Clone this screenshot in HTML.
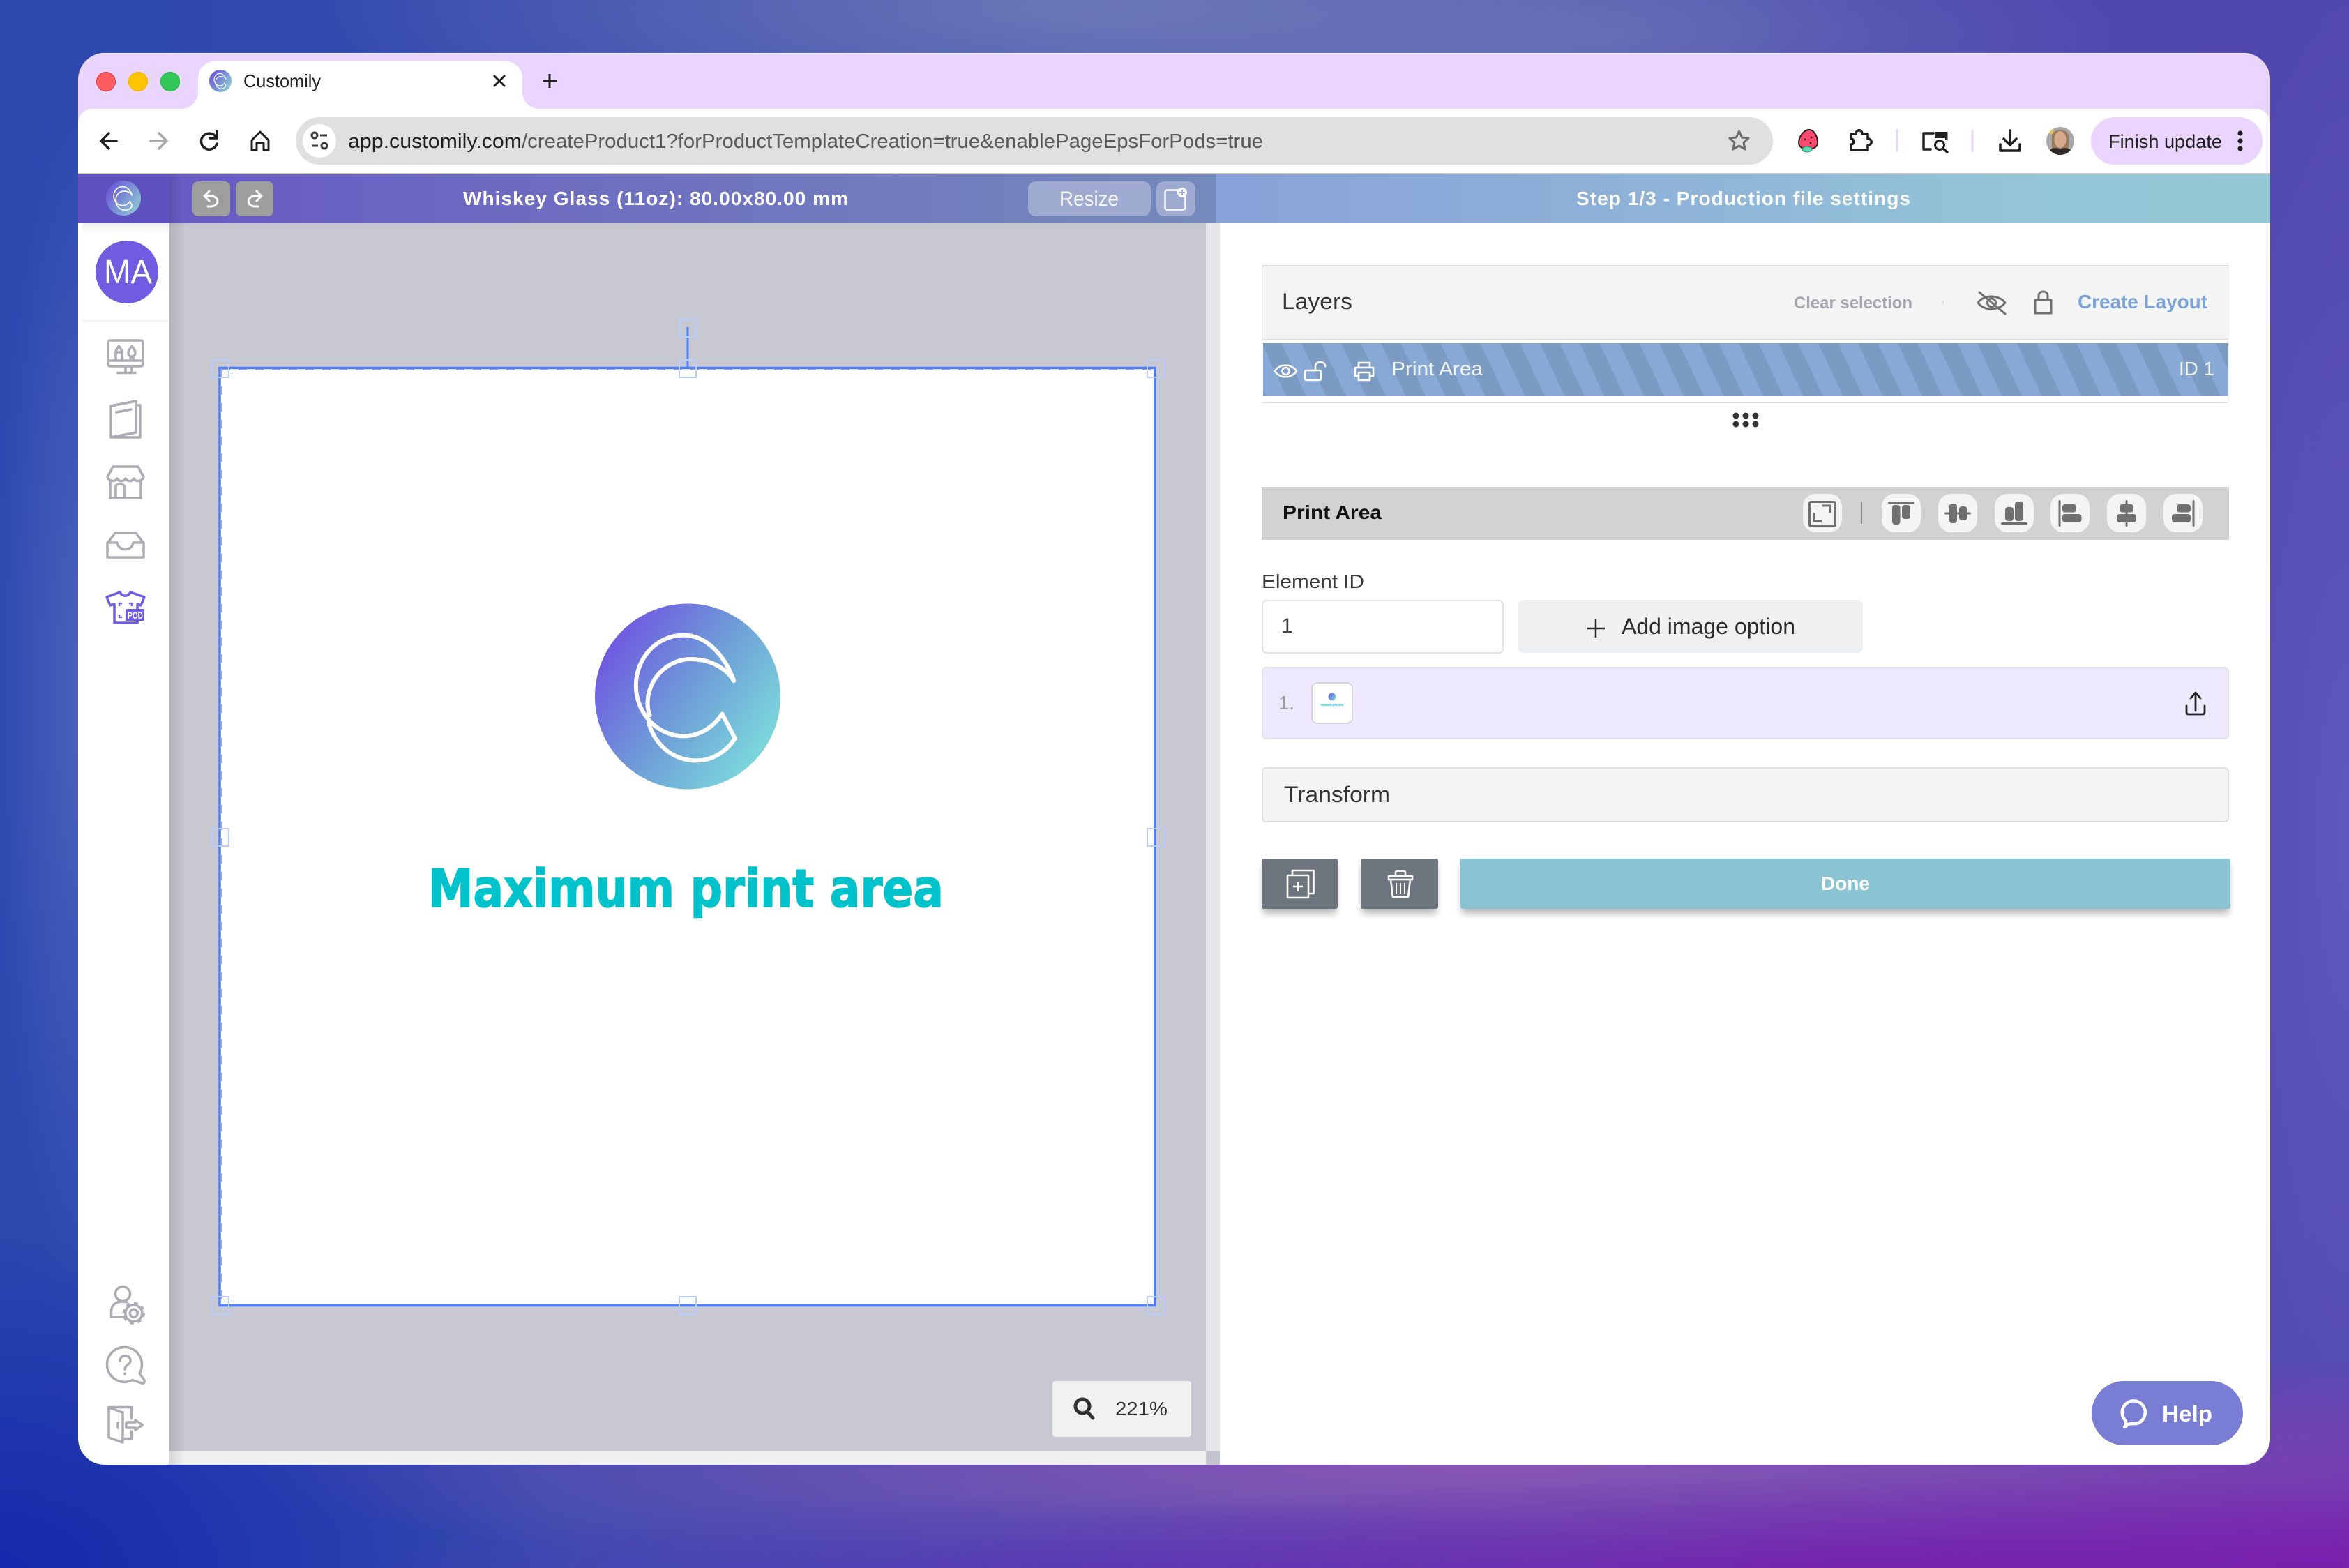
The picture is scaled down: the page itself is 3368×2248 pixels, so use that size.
<!DOCTYPE html>
<html>
<head>
<meta charset="utf-8">
<title>Customily</title>
<style>
html,body{margin:0;padding:0;width:3368px;height:2248px;overflow:hidden}
body{background:
 radial-gradient(1500px 150px at 2750px 2262px,#7720ae,rgba(119,32,174,0) 100%),
 radial-gradient(1000px 120px at 1500px 2262px,rgba(84,60,180,.95),rgba(84,60,180,0) 100%),
 radial-gradient(1800px 190px at 2150px 2100px,rgba(140,86,180,.97),rgba(140,86,180,0) 100%),
 radial-gradient(1100px 230px at 1560px 10px,rgba(112,126,184,.85),rgba(112,126,184,0) 100%),
 radial-gradient(800px 180px at 2250px 50px,rgba(112,122,184,.65),rgba(112,122,184,0) 100%),
 radial-gradient(1000px 300px at 3300px 2248px,#7a1fae,rgba(122,31,174,0) 100%),
 radial-gradient(240px 1300px at 3368px 1200px,rgba(98,90,190,.9),rgba(98,90,190,0) 100%),
 radial-gradient(800px 480px at 0px 2248px,#1528ac,rgba(21,40,172,0) 100%),
 radial-gradient(140px 900px at 125px 1000px,rgba(90,110,195,.7),rgba(90,110,195,0) 100%),
 linear-gradient(90deg,#2a48ae 0%,#4a50b0 50%,#5046ae 100%);
 font-family:"Liberation Sans",Arial,sans-serif}
svg{position:absolute;left:0;top:0;display:block}
text{font-family:"Liberation Sans",Arial,sans-serif}
.sb{fill:none;stroke:#abacb4;stroke-width:3.5;stroke-linejoin:round;stroke-linecap:round}
.ai{fill:#707070}
.wh{fill:none;stroke:#fff;stroke-width:3;stroke-linecap:round;stroke-linejoin:round}
.dk{fill:none;stroke:#1f1f1f;stroke-width:3.5;stroke-linecap:round;stroke-linejoin:round}
</style>
</head>
<body>
<svg width="3368" height="2248" viewBox="0 0 3368 2248" xmlns="http://www.w3.org/2000/svg">
<defs>
 <clipPath id="win"><rect x="112" y="76" width="3143" height="2024" rx="38"/></clipPath>
 <linearGradient id="lg" x1="0.08" y1="0.2" x2="0.95" y2="0.8">
  <stop offset="0" stop-color="#6f58e0"/><stop offset=".5" stop-color="#6f9fd8"/><stop offset="1" stop-color="#7cdcdc"/>
 </linearGradient>
 <linearGradient id="lg2" x1="0.08" y1="0.2" x2="0.95" y2="0.8">
  <stop offset="0" stop-color="#6a5ad8"/><stop offset="1" stop-color="#8cc8d2"/>
 </linearGradient>
 <linearGradient id="hl" x1="0" x2="1" y1="0" y2="0">
  <stop offset="0" stop-color="#6656c4"/><stop offset=".45" stop-color="#6e6ec0"/><stop offset="1" stop-color="#758abc"/>
 </linearGradient>
 <linearGradient id="hr" x1="0" x2="1" y1="0" y2="0">
  <stop offset="0" stop-color="#8aa2da"/><stop offset=".45" stop-color="#8fb4d8"/><stop offset=".75" stop-color="#93c5d6"/><stop offset="1" stop-color="#93c8d6"/>
 </linearGradient>
 <linearGradient id="sh" x1="0" x2="1" y1="0" y2="0">
  <stop offset="0" stop-color="#000" stop-opacity=".11"/><stop offset="1" stop-color="#000" stop-opacity="0"/>
 </linearGradient>
 <linearGradient id="shv" x1="0" x2="0" y1="0" y2="1">
  <stop offset="0" stop-color="#000" stop-opacity=".1"/><stop offset="1" stop-color="#000" stop-opacity="0"/>
 </linearGradient>
 <pattern id="stripes" width="57" height="76" patternUnits="userSpaceOnUse" patternTransform="translate(1809 492) skewX(25)">
  <rect width="57" height="76" fill="#88a9d6"/>
  <rect x="0" width="28.5" height="76" fill="#7b9bc3"/>
 </pattern>
 <filter id="blur" x="-20%" y="-20%" width="140%" height="160%"><feGaussianBlur stdDeviation="5"/></filter>
 <symbol id="cmark" viewBox="99 77 796 796">
  <circle cx="497" cy="475" r="398" fill="url(#lg)"/>
  <g fill="none" stroke="#fff" stroke-width="18" stroke-linecap="round" stroke-linejoin="round">
   <path d="M695,408 C665,320 590,212 478,212 C365,212 275,310 275,428 C275,545 365,645 480,645 C545,645 605,610 645,550 L700,655 C660,715 600,750 535,750 C440,750 360,690 330,590"/>
   <path d="M695,408 C660,350 590,315 510,315 C410,315 325,400 325,505 C325,525 328,540 334,555"/>
  </g>
 </symbol>
 <symbol id="cmark2" viewBox="99 77 796 796">
  <circle cx="497" cy="475" r="398" fill="url(#lg2)"/>
  <g fill="none" stroke="#fff" stroke-width="26" stroke-linecap="round" stroke-linejoin="round">
   <path d="M695,408 C665,320 590,212 478,212 C365,212 275,310 275,428 C275,545 365,645 480,645 C545,645 605,610 645,550 L700,655 C660,715 600,750 535,750 C440,750 360,690 330,590"/>
   <path d="M695,408 C660,350 590,315 510,315 C410,315 325,400 325,505 C325,525 328,540 334,555"/>
  </g>
 </symbol>
</defs>

<g clip-path="url(#win)">
 <!-- tab strip -->
 <rect x="112" y="76" width="3143" height="120" fill="#e9d5fd"/>
 <rect x="112" y="76" width="3143" height="2" fill="#f4ecfe"/>
 <path d="M260,156 A24,24 0 0 0 284,132 V112 A24,24 0 0 1 308,88 H725 A24,24 0 0 1 749,112 V132 A24,24 0 0 0 773,156 Z" fill="#fff"/>
 <circle cx="152" cy="117" r="13.5" fill="#ff5c61" stroke="#f0303c" stroke-width="1"/>
 <circle cx="198" cy="117" r="13.5" fill="#fdc500" stroke="#f2b200" stroke-width="1"/>
 <circle cx="244" cy="117" r="13.5" fill="#34c759" stroke="#12b83e" stroke-width="1"/>
 <use href="#cmark2" x="300" y="100" width="32" height="32"/>
 <text x="349" y="125" font-size="26" fill="#1f1f1f" textLength="111" lengthAdjust="spacingAndGlyphs">Customily</text>
 <path d="M708,108 L724,124 M724,108 L708,124" fill="none" stroke="#1f1f1f" stroke-width="3"/>
 <path d="M788,106 V126 M778,116 H798" fill="none" stroke="#1f1f1f" stroke-width="3"/>

 <!-- toolbar -->
 <rect x="112" y="156" width="3143" height="120" rx="20" fill="#fff"/>
 <rect x="112" y="248" width="3143" height="2" fill="#c8c8c8"/>
 <path class="dk" d="M167,202 H146 M156,191 L145,202 L156,213"/>
 <path class="dk" d="M216,202 H238 M228,191 L239,202 L228,213" style="stroke:#a8a8a8"/>
 <path class="dk" d="M310,197 A11.5,11.5 0 1 0 311,206 M311,188 V198 H301"/>
 <path d="M373,189 L361,201 V215 H368 V205 H378 V215 H385 V201 Z" fill="none" stroke="#1f1f1f" stroke-width="3" stroke-linejoin="round"/>
 <rect x="424" y="168" width="2118" height="68" rx="34" fill="#e0e0e0"/>
 <circle cx="458" cy="202" r="24" fill="#fff"/>
 <g fill="none" stroke="#3c3c3c" stroke-width="3">
  <circle cx="451" cy="194" r="4"/><path d="M459,194 H469 M447,209 H456"/><circle cx="465" cy="209" r="4"/>
 </g>
 <text x="499" y="212" font-size="29" fill="#1f1f1f" textLength="249" lengthAdjust="spacingAndGlyphs">app.customily.com</text>
 <text x="748" y="212" font-size="29" fill="#5a5a5a" textLength="1063" lengthAdjust="spacingAndGlyphs">/createProduct1?forProductTemplateCreation=true&amp;enablePageEpsForPods=true</text>
 <polygon points="2493.5,188 2497.5,197 2507,198 2500,204.5 2502,214 2493.5,209 2485,214 2487,204.5 2480,198 2489.5,197" fill="none" stroke="#6b6b6b" stroke-width="3" stroke-linejoin="round"/>
 <path d="M2595,186 C2602,187 2607,198 2606,206 C2605,212 2598,214 2592,214 C2586,214 2579,212 2579,204 C2579,196 2587,185 2595,186Z" fill="#ff4870" stroke="#222" stroke-width="2"/>
 <ellipse cx="2591" cy="214" rx="7" ry="4" fill="#5fd8b0" stroke="#2f7a66" stroke-width="1"/>
 <circle cx="2588" cy="200" r="1.4" fill="#222"/><circle cx="2597" cy="197" r="1.4" fill="#222"/><circle cx="2596" cy="205" r="1.4" fill="#222"/>
 <path class="dk" d="M2654,192 H2661 C2661,185 2670,185 2670,192 H2678 V199 C2685,199 2685,208 2678,208 V215 H2654 V207 C2659,207 2659,199 2654,199 Z"/>
 <rect x="2718.5" y="186" width="3" height="32" rx="1.5" fill="#e9d5fd"/>
 <path class="dk" d="M2772,191 H2758 V214 H2768"/>
 <rect x="2774" y="189" width="17" height="9" fill="#1f1f1f"/>
 <rect x="2789" y="189" width="3.5" height="12" fill="#1f1f1f"/>
 <circle cx="2781" cy="208" r="6.5" fill="none" stroke="#1f1f1f" stroke-width="3"/>
 <path class="dk" d="M2786,213 L2792,218"/>
 <rect x="2826.5" y="186" width="3" height="32" rx="1.5" fill="#e9d5fd"/>
 <path class="dk" d="M2882,187 V207 M2873,199 L2882,208 L2891,199 M2868,207 V216 H2896 V207"/>
 <clipPath id="av"><circle cx="2954" cy="202" r="20"/></clipPath>
 <circle cx="2954" cy="202" r="20" fill="#a8a8aa"/>
 <g clip-path="url(#av)">
  <path d="M2942,222 V196 C2942,183 2966,183 2966,196 V222 Z" fill="#9a7a58"/>
  <ellipse cx="2954" cy="200" rx="8.5" ry="12" fill="#d8a98c"/>
  <path d="M2934,224 C2936,212 2948,210 2954,214 C2960,210 2972,212 2974,224 Z" fill="#2e2a28"/>
  <rect x="2938" y="182" width="6" height="10" fill="#e0c060"/>
 </g>
 <rect x="2998" y="168" width="246" height="68" rx="34" fill="#e9d5fd"/>
 <text x="3023" y="212" font-size="27" fill="#1f1f1f" textLength="163" lengthAdjust="spacingAndGlyphs">Finish update</text>
 <circle cx="3212" cy="191" r="3.6" fill="#1f1f1f"/><circle cx="3212" cy="202" r="3.6" fill="#1f1f1f"/><circle cx="3212" cy="213" r="3.6" fill="#1f1f1f"/>

 <!-- app header -->
 <rect x="112" y="250" width="1632" height="70" fill="url(#hl)"/>
 <rect x="1744" y="250" width="1511" height="70" fill="url(#hr)"/>

 <!-- canvas -->
 <rect x="112" y="320" width="3143" height="1780" fill="#fff"/>
 <rect x="242" y="320" width="1487" height="1760" fill="#c8c8d2"/>
 <rect x="242" y="2080" width="1487" height="20" fill="#f0f0f0"/>
 <rect x="1729" y="320" width="20" height="1760" fill="#e7e7e9"/>
 <rect x="1729" y="2080" width="20" height="20" fill="#c4c4ce"/>
 <rect x="242" y="320" width="24" height="1780" fill="url(#sh)"/>
 <rect x="242" y="250" width="18" height="70" fill="url(#sh)"/>
 <rect x="242" y="320" width="1487" height="10" fill="url(#shv)" opacity=".25"/>

 <!-- sidebar -->
 <rect x="112" y="250" width="130" height="70" fill="#5f50c0"/>
 <use href="#cmark2" x="152" y="259" width="50" height="50"/>
 <rect x="118" y="320" width="124" height="16" fill="url(#shv)" opacity=".6"/>
 <rect x="118" y="459" width="124" height="2" fill="#f3f3f4"/>
 <rect x="118" y="461" width="124" height="4" fill="url(#shv)" opacity=".25"/>
 <circle cx="182" cy="390" r="45" fill="#6f5ce0"/>
 <text x="149" y="406" font-size="48" fill="#fff" textLength="69" lengthAdjust="spacingAndGlyphs">MA</text>

 <!-- monitor -->
 <g class="sb">
  <rect x="155" y="488" width="50" height="37" rx="3"/>
  <path d="M155,517 H205 M180,526 V534 M189,526 V534 M169,534.5 H194"/>
  <path d="M166,516 V503 L170.5,496 L175,503 V516 M166,505 H175"/>
  <path d="M189,496 C186,500 184,503 184,506 C184,509 186,511 189,511 C192,511 194,509 194,506 C194,503 192,500 189,496 Z M187,511 V516 M191,511 V516"/>
 </g>
 <!-- book -->
 <g class="sb">
  <path d="M159,582 L195,575 V620 L159,627 Z"/>
  <path d="M196,581 H201 V627 H159"/>
  <path d="M167,591 L188,587"/>
 </g>
 <!-- store -->
 <g class="sb">
  <path d="M162,669 H198 L206,684 C203,691 194,691 192,686 C189,691 183,691 180,686 C177,691 171,691 168,686 C165,691 157,691 154,684 Z"/>
  <path d="M158,690 V714 H202 V690"/>
  <path d="M166,714 V698 C166,692 178,692 178,698 V714"/>
 </g>
 <!-- inbox -->
 <g class="sb">
  <path d="M165,764 H195 L206,779 V799 H154 V779 Z"/>
  <path d="M154,778 H168 C170,791 189,791 191,778 H206"/>
 </g>
 <!-- shirt -->
 <g fill="none" stroke="#6f5ce0" stroke-width="3.5" stroke-linejoin="round" stroke-linecap="round">
  <path d="M153,856 L172,849 C175,856 184,856 187,849 L207,856 L202,868 L197,866 V893 H164 V866 L158,868 Z"/>
  <path stroke-width="2.5" d="M171,868 V865 H174 M186,865 H189 V868 M171,882 V885 H174"/>
 </g>
 <rect x="180" y="873" width="27" height="17" rx="2" fill="#6f5ce0"/>
 <text x="183" y="887" font-size="14" font-weight="bold" fill="#fff" textLength="22" lengthAdjust="spacingAndGlyphs">POD</text>
 <!-- user gear -->
 <g class="sb">
  <circle cx="176" cy="1855" r="10.5"/>
  <path d="M178,1888 H159.5 V1880 C159.5,1870 167,1866 176,1866 C178,1866 180,1866 182,1867"/>
  <circle cx="191.7" cy="1882.7" r="5.5"/>
  <circle cx="191.7" cy="1882.7" r="12"/>
 </g>
 <circle cx="191.7" cy="1882.7" r="14.5" fill="none" stroke="#abacb4" stroke-width="3.5" stroke-dasharray="5.5 5.9"/>
 <!-- help -->
 <g class="sb">
  <path d="M200,1969 A25,25 0 1 0 190,1978.5 L203,1983 C207,1984 208,1981 206.5,1978 Z"/>
  <path d="M172,1951 C172,1941 187,1941 187,1951 C187,1956 179,1957 179,1963"/>
  <path d="M179,1969 V1970"/>
 </g>
 <!-- door -->
 <g class="sb">
  <path d="M156,2018 L176,2025 V2068 L156,2061 Z"/>
  <path d="M156,2017.5 H188.5 V2034 M188.5,2052 V2062.5 H178"/>
  <path d="M169,2040 V2047"/>
  <path d="M181,2039 H194 V2036 L204.5,2043 L194,2050 V2047 H181 Z"/>
 </g>

 <!-- print area -->
 <rect x="315" y="528" width="1341" height="1344" fill="#fff"/>
 <path d="M318,530 H1654 M318,530 V1870" fill="none" stroke="#aaaab4" stroke-width="2" stroke-dasharray="12 12"/>
 <rect x="315" y="527.5" width="1341" height="1344" fill="none" stroke="#4f80fa" stroke-width="3.5"/>
 <path d="M986,469 V527" stroke="#4f80fa" stroke-width="3"/>
 <g fill="none" stroke="#b8ceff" stroke-width="2">
  <rect x="974" y="458" width="24" height="25"/>
  <rect x="304" y="516" width="24" height="25"/><rect x="974" y="516" width="24" height="25"/><rect x="1645" y="516" width="24" height="25"/>
  <rect x="304" y="1188" width="24" height="25"/><rect x="1645" y="1188" width="24" height="25"/>
  <rect x="304" y="1859" width="24" height="25"/><rect x="974" y="1859" width="24" height="25"/><rect x="1645" y="1859" width="24" height="25"/>
 </g>
 <use href="#cmark" x="853" y="865" width="266" height="267"/>
 <text x="614" y="1300" font-size="75" font-weight="bold" fill="#00c2cb" stroke="#00c2cb" stroke-width="1.6" textLength="739" lengthAdjust="spacingAndGlyphs" style="font-family:'DejaVu Sans',sans-serif">Maximum print area</text>

 <!-- zoom box -->
 <rect x="1509" y="1980" width="199" height="80" rx="4" fill="#f1f1f1"/>
 <circle cx="1552" cy="2016" r="10" fill="none" stroke="#2f2f2f" stroke-width="5"/>
 <path d="M1559,2024 L1567,2033" stroke="#2f2f2f" stroke-width="5" stroke-linecap="round"/>
 <text x="1599" y="2029" font-size="28" fill="#333" textLength="75" lengthAdjust="spacingAndGlyphs">221%</text>

 <!-- header controls -->
 <rect x="276" y="260" width="54" height="50" rx="8" fill="#9e9e9e"/>
 <rect x="338" y="260" width="54" height="50" rx="8" fill="#9e9e9e"/>
 <path class="wh" d="M300,274 L293,281 L300,288 M293,281 H302 C315,281 315,296 302,296 H298" stroke-width="2.5"/>
 <path class="wh" d="M368,274 L375,281 L368,288 M375,281 H366 C353,281 353,296 366,296 H370" stroke-width="2.5"/>
 <text x="664" y="294" font-size="28" font-weight="bold" fill="#fff" textLength="552" lengthAdjust="spacing">Whiskey Glass (11oz): 80.00x80.00 mm</text>
 <rect x="1474" y="260" width="176" height="50" rx="11" fill="#9faad1"/>
 <rect x="1658" y="260" width="56" height="50" rx="11" fill="#9faad1"/>
 <text x="1519" y="295" font-size="30" fill="#f6f7fb" textLength="85" lengthAdjust="spacingAndGlyphs">Resize</text>
 <rect x="1670.5" y="272.5" width="29" height="28" rx="3" fill="none" stroke="#fff" stroke-width="2.5"/>
 <circle cx="1695" cy="276" r="7" fill="#fff"/>
 <path d="M1695,272 V280 M1691,276 H1699" stroke="#9faad1" stroke-width="2"/>
 <text x="2260" y="294" font-size="28" font-weight="bold" fill="#fff" textLength="479" lengthAdjust="spacing">Step 1/3 - Production file settings</text>

 <!-- Layers -->
 <rect x="1809" y="380" width="1386.5" height="198" rx="3" fill="#fff"/>
 <rect x="1809" y="380" width="1386.5" height="108" fill="#f4f4f4"/>
 <rect x="1809" y="380" width="1386.5" height="2" fill="#dcdcdc"/>
 <rect x="1809" y="486" width="1386.5" height="2" fill="#dcdcdc"/>
 <rect x="1809" y="576" width="1386.5" height="2" fill="#dcdcdc"/>
 <path d="M1809.5,382 V578 M3195,382 V578" stroke="#e6e6e6" stroke-width="1"/>
 <rect x="1811" y="492" width="1384" height="76" fill="url(#stripes)"/>
 <text x="1838" y="443" font-size="32" fill="#333" textLength="101" lengthAdjust="spacingAndGlyphs">Layers</text>
 <text x="2572" y="442" font-size="24" font-weight="bold" fill="#a6a6ae" textLength="170" lengthAdjust="spacingAndGlyphs">Clear selection</text>
 <rect x="2785" y="432" width="2" height="4" fill="#ddd"/>
 <g fill="none" stroke="#707070" stroke-width="3" stroke-linecap="round" stroke-linejoin="round">
  <path d="M2836,434 C2844,422 2866,422 2875,434 C2866,446 2844,446 2836,434 Z"/>
  <circle cx="2855.5" cy="434" r="6"/>
  <path d="M2838,419 L2875,450"/>
  <path d="M2918,430 H2941 V449 H2918 Z"/>
  <path d="M2923,430 V424 C2923,416 2936,416 2936,424 V430"/>
 </g>
 <text x="2979" y="442" font-size="28" font-weight="bold" fill="#7ba3d8" textLength="186" lengthAdjust="spacingAndGlyphs">Create Layout</text>
 <g fill="none" stroke="#fff" stroke-width="2.6" stroke-linejoin="round" stroke-linecap="round">
  <path d="M1828,532 C1834,521 1852,521 1859,532 C1852,543 1834,543 1828,532 Z"/>
  <circle cx="1843.5" cy="532" r="5"/>
  <rect x="1871" y="531" width="23" height="14" rx="2"/>
  <path d="M1886,531 V525 C1886,517 1900,517 1900,525"/>
  <path d="M1948,527 V520 H1964 V527 M1943,539 V527 H1969 V539 H1964 M1948,539 H1943 M1948,534 H1964 V545 H1948 Z"/>
 </g>
 <text x="1995" y="538" font-size="28" fill="#f2f5fa" textLength="131" lengthAdjust="spacingAndGlyphs">Print Area</text>
 <text x="3124" y="538" font-size="28" fill="#f2f5fa" textLength="51" lengthAdjust="spacingAndGlyphs">ID 1</text>
 <g fill="#333">
  <circle cx="2489" cy="596" r="4.5"/><circle cx="2503" cy="596" r="4.5"/><circle cx="2517" cy="596" r="4.5"/>
  <circle cx="2489" cy="608" r="4.5"/><circle cx="2503" cy="608" r="4.5"/><circle cx="2517" cy="608" r="4.5"/>
 </g>

 <!-- Print Area bar -->
 <rect x="1809" y="698" width="1387" height="76" fill="#d2d2d2"/>
 <text x="1839" y="744" font-size="28" font-weight="bold" fill="#111" textLength="142" lengthAdjust="spacingAndGlyphs">Print Area</text>
 <g fill="#f4f4f4">
  <rect x="2585" y="708" width="56" height="55" rx="18"/>
  <rect x="2698" y="708" width="56" height="55" rx="18"/>
  <rect x="2779" y="708" width="56" height="55" rx="18"/>
  <rect x="2860" y="708" width="56" height="55" rx="18"/>
  <rect x="2940" y="708" width="56" height="55" rx="18"/>
  <rect x="3021" y="708" width="56" height="55" rx="18"/>
  <rect x="3102" y="708" width="56" height="55" rx="18"/>
 </g>
 <rect x="2668" y="720" width="2" height="31" fill="#8a8a8a"/>
 <rect x="2594.5" y="719.5" width="37" height="35" rx="2" fill="none" stroke="#707070" stroke-width="3"/>
 <path d="M2612.5,725 H2624.5 V735 M2600.5,735 V747 H2612" fill="none" stroke="#707070" stroke-width="3"/>
 <g class="ai">
  <rect x="2707" y="719" width="38" height="3" rx="1.5"/><rect x="2713" y="724" width="11.5" height="28" rx="4"/><rect x="2727" y="724" width="12" height="20" rx="4"/>
  <rect x="2788" y="734.5" width="38" height="3" rx="1.5"/><rect x="2795" y="722" width="11" height="28" rx="4"/><rect x="2809" y="726" width="11.5" height="20" rx="4"/>
  <rect x="2869" y="749" width="38" height="3" rx="1.5"/><rect x="2875" y="727" width="12" height="20" rx="4"/><rect x="2889" y="719" width="12" height="28" rx="4"/>
  <rect x="2951.5" y="717" width="3" height="38" rx="1.5"/><rect x="2957" y="723" width="20" height="11.5" rx="4"/><rect x="2957" y="737" width="27.5" height="12" rx="4"/>
  <rect x="3047.5" y="717" width="3" height="38" rx="1.5"/><rect x="3039" y="723" width="20" height="11.5" rx="4"/><rect x="3035" y="737" width="28" height="12" rx="4"/>
  <rect x="3143.5" y="717" width="3" height="38" rx="1.5"/><rect x="3121" y="723" width="20" height="11.5" rx="4"/><rect x="3114" y="737" width="27" height="12" rx="4"/>
 </g>

 <!-- Element ID -->
 <text x="1809" y="843" font-size="28" fill="#3a3a3a" textLength="147" lengthAdjust="spacingAndGlyphs">Element ID</text>
 <rect x="1810" y="861" width="345" height="75" rx="6" fill="#fff" stroke="#e2e2e4" stroke-width="2"/>
 <text x="1837" y="907" font-size="30" fill="#444">1</text>
 <rect x="2176" y="860" width="495" height="76" rx="8" fill="#eff0f2"/>
 <path d="M2288,888 V914 M2275,901 H2301" stroke="#2a2a2a" stroke-width="2.5"/>
 <text x="2325" y="909" font-size="32" fill="#2a2a2a" textLength="249" lengthAdjust="spacingAndGlyphs">Add image option</text>

 <!-- option row -->
 <rect x="1810" y="957" width="1385" height="102" rx="5" fill="#ede8fc" stroke="#e2e0ea" stroke-width="2"/>
 <text x="1833" y="1017" font-size="28" fill="#9a9a9a" textLength="23" lengthAdjust="spacing">1.</text>
 <rect x="1881" y="979" width="58" height="58" rx="8" fill="#fff" stroke="#d4d4de" stroke-width="2"/>
 <circle cx="1910" cy="999" r="5.5" fill="url(#lg)"/>
 <text x="1894" y="1012" font-size="4.5" font-weight="bold" fill="#00c2cb" textLength="32" lengthAdjust="spacingAndGlyphs">Maximum print area</text>
 <path d="M3148,1019 V994 M3141,1001 L3148,993 L3155,1001 M3135,1012 V1021 C3135,1023 3136,1024 3138,1024 H3158 C3160,1024 3161,1023 3161,1021 V1012" fill="none" stroke="#222" stroke-width="2.8" stroke-linecap="round" stroke-linejoin="round"/>

 <!-- transform -->
 <rect x="1810" y="1101" width="1385" height="77" rx="5" fill="#f4f4f4" stroke="#dedede" stroke-width="2"/>
 <text x="1841" y="1150" font-size="32" fill="#333" textLength="152" lengthAdjust="spacingAndGlyphs">Transform</text>

 <!-- buttons -->
 <g filter="url(#blur)" opacity=".28" fill="#000">
  <rect x="1811" y="1240" width="105" height="70"/><rect x="1953" y="1240" width="107" height="70"/><rect x="2096" y="1240" width="1100" height="70"/>
 </g>
 <rect x="1809" y="1231" width="109" height="72" rx="3" fill="#6c747e"/>
 <rect x="1951" y="1231" width="111" height="72" rx="3" fill="#6c747e"/>
 <rect x="2094" y="1231" width="1104" height="72" rx="3" fill="#8ac4d2"/>
 <g fill="none" stroke="#fff" stroke-width="2.6" stroke-linejoin="round">
  <path d="M1853,1255 V1248 H1883.5 V1281 H1876"/>
  <rect x="1846" y="1255" width="30" height="32" rx="1"/>
  <path d="M1861,1264 V1278 M1854,1271 H1868"/>
  <path d="M1991,1256 H2025 V1261 H1991 Z M2001,1256 V1250 C2001,1248 2015,1248 2015,1250 V1256"/>
  <path d="M1994,1261 L1997,1286 H2019 L2022,1261"/>
  <path stroke-width="2" d="M2002,1266 V1281 M2008,1266 V1281 M2014,1266 V1281"/>
 </g>
 <text x="2611" y="1276" font-size="28" font-weight="bold" fill="#fff" textLength="70" lengthAdjust="spacingAndGlyphs">Done</text>

 <!-- help -->
 <rect x="2999" y="1980" width="217" height="92" rx="46" fill="#7a7dd4"/>
 <path d="M3050,2042 C3049,2045 3047,2046 3046,2046 C3048,2044 3048,2040 3048,2037 A16.5,16.5 0 1 1 3063,2041 C3058,2041 3054,2041 3050,2042 Z" fill="none" stroke="#fff" stroke-width="4.5" stroke-linejoin="round"/>
 <text x="3100" y="2038" font-size="32" font-weight="bold" fill="#fff" textLength="72" lengthAdjust="spacingAndGlyphs">Help</text>
</g>
</svg>
</body>
</html>
